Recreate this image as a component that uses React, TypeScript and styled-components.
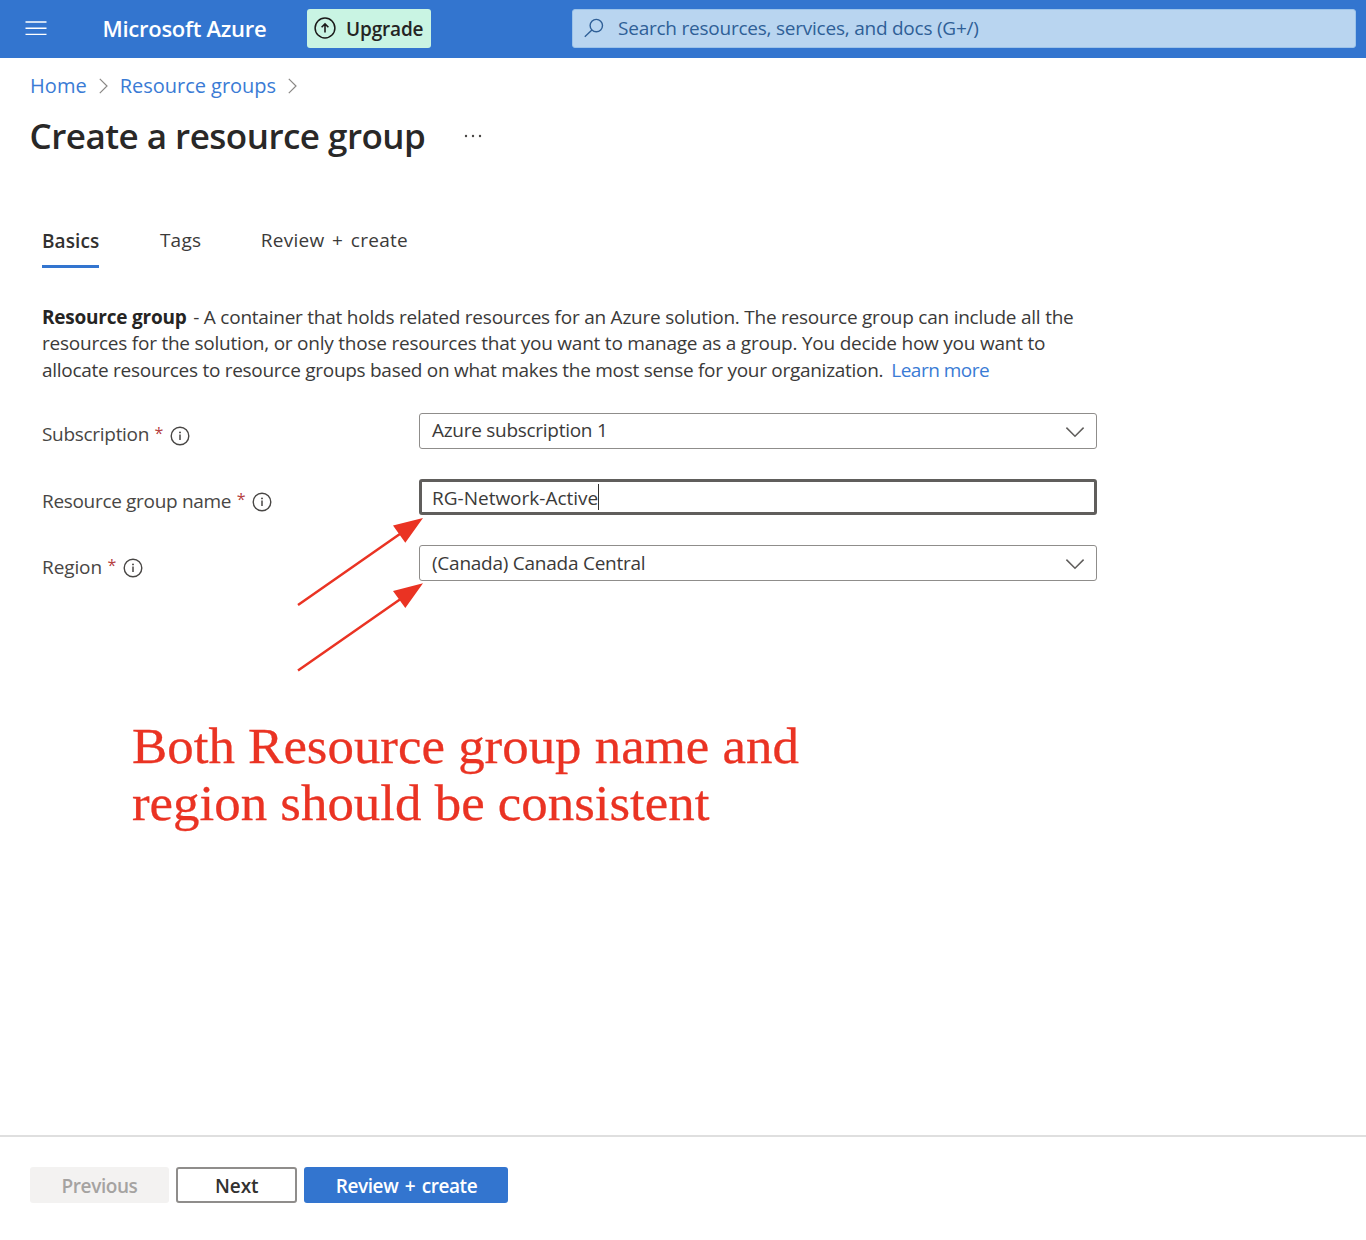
import React from "react";
import styled, { createGlobalStyle } from "styled-components";

const GlobalStyle = createGlobalStyle`
  * { box-sizing: border-box; }
  body {
    margin: 0;
    background: #fff;
    color: #323130;
    font-family: "Open Sans", "Noto Sans", sans-serif;
    font-size: 19px;
  }
`;

const Page = styled.div`
  position: relative;
  display: flex;
  flex-direction: column;
  height: 1240px;
  overflow: hidden;
`;

const TopBar = styled.header`
  display: flex;
  align-items: center;
  flex: none;
  height: 58px;
  padding: 0 10px 2px 25px;
  background: #3375cf;
`;

const MenuIcon = styled.svg`
  flex: none;
  width: 22px;
  height: 16px;
  margin-right: 55.5px;
`;

const Brand = styled.div`
  width: 204.5px;
  color: #fff;
  font-size: 22px;
  font-weight: 600;
  letter-spacing: -0.27px;
  line-height: 36px;
  white-space: nowrap;
`;

const Upgrade = styled.button`
  display: flex;
  align-items: center;
  gap: 10px;
  width: 124px;
  height: 39px;
  padding: 0 0 1px 7px;
  border: 0;
  border-radius: 3px;
  background: #c9f4e3;
  color: #252423;
  font: 600 19px/36px "Open Sans", sans-serif;
  letter-spacing: -0.15px;
  white-space: nowrap;
  & > svg { flex: none; }
  & > span { padding-top: 2px; }
`;

const SearchBox = styled.div`
  display: flex;
  align-items: center;
  gap: 13px;
  flex: 1;
  height: 39px;
  margin-left: 141px;
  padding: 0 0 1px 11px;
  border: 1px solid #9cc3ea;
  border-radius: 3px;
  background: #b9d5f0;
  color: #2f5f97;
  letter-spacing: -0.23px;
  line-height: 36px;
  white-space: nowrap;
  & > span { margin-left: 1px; }
`;

const Breadcrumb = styled.nav`
  display: flex;
  align-items: center;
  height: 30px;
  margin-top: 13px;
  padding-left: 30px;
  font-size: 20px;
`;

const Crumb = styled.a<{ $tracking: number }>`
  color: #3a7bd5;
  letter-spacing: ${(p) => p.$tracking}px;
  line-height: 30px;
`;

const CrumbArrow = styled.svg`
  width: 9px;
  height: 16px;
  margin: 0 12px;
`;

const TitleRow = styled.div`
  display: flex;
  align-items: center;
  gap: 38px;
  height: 50px;
  margin-top: 10px;
  padding-left: 29.5px;
`;

const Title = styled.h1`
  margin: 0;
  color: #292827;
  font-size: 35px;
  font-weight: 600;
  letter-spacing: -0.52px;
  line-height: 50px;
`;

const Tabs = styled.div`
  display: flex;
  align-items: flex-start;
  height: 43px;
  margin-top: 64px;
  padding-left: 42px;
`;

const Tab = styled.div<{ $active?: boolean; $gap?: number }>`
  height: 43px;
  margin-left: ${(p) => p.$gap ?? 0}px;
  border-bottom: 3px solid ${(p) => (p.$active ? "#3375cf" : "transparent")};
  color: ${(p) => (p.$active ? "#323130" : "#3b3a39")};
  font-weight: ${(p) => (p.$active ? 600 : 400)};
  line-height: ${(p) => (p.$active ? 33 : 31)}px;
  word-spacing: ${(p) => (p.$active ? 0 : 2.5)}px;
  letter-spacing: ${(p) => (p.$active ? 0.1 : 0.25)}px;
`;

const Description = styled.p`
  margin: 36px 0 0;
  padding-left: 42px;
  color: #3b3a39;
  line-height: 26.45px;
  white-space: nowrap;
  & b { margin-right: 2px; color: #252423; letter-spacing: -0.22px; }
`;

const Line = styled.span<{ $tracking: number }>`
  display: block;
  letter-spacing: ${(p) => p.$tracking}px;
`;

const Link = styled.a`
  margin-left: 8px;
  color: #3a7bd5;
  letter-spacing: -0.5px;
`;

const Form = styled.div`
  display: grid;
  gap: 30px;
  margin-top: 29.5px;
  padding-left: 42px;
`;

const Field = styled.div`
  display: grid;
  grid-template-columns: 377px 678px;
  height: 36.25px;
`;

const Label = styled.label<{ $tracking: number }>`
  display: flex;
  align-items: center;
  height: 43px;
  color: #484644;
  line-height: 42px;
  letter-spacing: ${(p) => p.$tracking}px;
`;

const Required = styled.span`
  margin: 0 7px 3px 5.5px;
  color: #b5403f;
  font-size: 16px;
  letter-spacing: 0;
`;

const Control = styled.div<{ $focused?: boolean; $tracking: number }>`
  display: flex;
  align-items: center;
  justify-content: space-between;
  height: 36px;
  padding: 0 ${(p) => (p.$focused ? 10 : 11)}px ${(p) => (p.$focused ? 0 : 1)}px ${(p) => (p.$focused ? 10 : 12)}px;
  border: ${(p) => (p.$focused ? "3px solid #605e5c" : "1.5px solid #8f8d8b")};
  border-radius: 3px;
  color: #3b3a39;
  letter-spacing: ${(p) => p.$tracking}px;
  line-height: 30px;
  & > svg { margin-top: 3px; }
`;

const Typed = styled.span`
  height: 26px;
  border-right: 1.5px solid #323130;
  line-height: 28px;
`;

const Footer = styled.footer`
  display: flex;
  gap: 7.5px;
  height: 105px;
  margin-top: auto;
  padding: 30px 0 0 29.5px;
  border-top: 2px solid #dfdfdf;
`;

const Button = styled.button<{ $kind: "disabled" | "plain" | "primary"; $width: number }>`
  width: ${(p) => p.$width}px;
  height: 36px;
  padding: 2px 0 0 1px;
  border: ${(p) => (p.$kind === "plain" ? "2px solid #8f8d8b" : "0")};
  border-radius: 3px;
  background: ${(p) => ({ disabled: "#f3f2f1", plain: "#fff", primary: "#3375cf" })[p.$kind]};
  color: ${(p) => ({ disabled: "#a5a3a1", plain: "#323130", primary: "#fff" })[p.$kind]};
  font: 600 19px/30px "Open Sans", sans-serif;
  letter-spacing: ${(p) => (p.$kind === "plain" ? -0.1 : -0.42)}px;
  word-spacing: 2px;
`;

const Arrows = styled.svg`
  position: absolute;
  left: 290px;
  top: 510px;
  width: 140px;
  height: 165px;
`;

const Note = styled.div`
  position: absolute;
  left: 131.5px;
  top: 718px;
  color: #ea3323;
  font-family: "Liberation Serif", serif;
  font-size: 50px;
  line-height: 57px;
  white-space: nowrap;
  transform: scaleX(1.058);
  transform-origin: left;
  -webkit-text-stroke: 0.3px #ea3323;
`;

const InfoIcon = styled.svg`
  flex: none;
  width: 20px;
  height: 20px;
  margin-top: 3px;
`;

const Info = () => (
  <InfoIcon viewBox="0 0 20 20" fill="none">
    <circle cx="10" cy="10" r="8.8" stroke="#484644" strokeWidth="1.4" />
    <path d="M10 8.6v5.4" stroke="#484644" strokeWidth="1.5" />
    <circle cx="10" cy="6.4" r="0.95" fill="#484644" />
  </InfoIcon>
);

const Chevron = () => (
  <svg width="20" height="12" viewBox="0 0 20 12" fill="none">
    <path d="M1.4 1.6L10 10.2l8.6-8.6" stroke="#605e5c" strokeWidth="1.5" />
  </svg>
);

const Separator = () => (
  <CrumbArrow viewBox="0 0 9 16" fill="none">
    <path d="M0.8 0.8L8 8l-7.2 7.2" stroke="#8a8886" strokeWidth="1.2" />
  </CrumbArrow>
);

export default function App() {
  return (
    <Page>
      <GlobalStyle />
      <TopBar>
        <MenuIcon viewBox="0 0 22 16" fill="none">
          <path d="M0.5 2h21M0.5 8.2h21M0.5 14.4h21" stroke="#fff" strokeWidth="1.4" />
        </MenuIcon>
        <Brand>Microsoft Azure</Brand>
        <Upgrade>
          <svg width="22" height="22" viewBox="0 0 22 22" fill="none" stroke="#1b1a19">
            <circle cx="11" cy="11" r="9.9" strokeWidth="1.5" />
            <path d="M11 15.4V7.2M7.6 10.3L11 6.9l3.4 3.4" strokeWidth="1.6" />
          </svg>
          <span>Upgrade</span>
        </Upgrade>
        <SearchBox>
          <svg width="20" height="20" viewBox="0 0 20 20" fill="none" stroke="#2f5f97">
            <circle cx="12.3" cy="7.6" r="6.2" strokeWidth="1.4" />
            <path d="M7.9 12L0.8 18.8" strokeWidth="1.4" />
          </svg>
          <span>Search resources, services, and docs (G+/)</span>
        </SearchBox>
      </TopBar>
      <Breadcrumb>
        <Crumb $tracking={0.05}>Home</Crumb>
        <Separator />
        <Crumb $tracking={-0.03}>Resource groups</Crumb>
        <Separator />
      </Breadcrumb>
      <TitleRow>
        <Title>Create a resource group</Title>
        <svg width="20" height="4" viewBox="0 0 20 4" fill="#484644">
          <circle cx="3" cy="2" r="1.2" />
          <circle cx="10" cy="2" r="1.2" />
          <circle cx="17" cy="2" r="1.2" />
        </svg>
      </TitleRow>
      <Tabs>
        <Tab $active>Basics</Tab>
        <Tab $gap={60.5}>Tags</Tab>
        <Tab $gap={59.5}>Review + create</Tab>
      </Tabs>
      <Description>
        <Line $tracking={-0.235}>
          <b>Resource group</b> - A container that holds related resources for an Azure solution. The resource group can include all the
        </Line>
        <Line $tracking={-0.23}>resources for the solution, or only those resources that you want to manage as a group. You decide how you want to</Line>
        <Line $tracking={-0.28}>
          allocate resources to resource groups based on what makes the most sense for your organization.
          <Link>Learn more</Link>
        </Line>
      </Description>
      <Form>
        <Field>
          <Label $tracking={-0.3}>Subscription<Required>*</Required><Info /></Label>
          <Control $tracking={-0.28}>Azure subscription 1<Chevron /></Control>
        </Field>
        <Field>
          <Label $tracking={-0.32}>Resource group name<Required>*</Required><Info /></Label>
          <Control $focused $tracking={0}><Typed>RG-Network-Active</Typed></Control>
        </Field>
        <Field>
          <Label $tracking={-0.1}>Region<Required>*</Required><Info /></Label>
          <Control $tracking={-0.25}>(Canada) Canada Central<Chevron /></Control>
        </Field>
      </Form>
      <Footer>
        <Button $kind="disabled" $width={139}>Previous</Button>
        <Button $kind="plain" $width={120.5}>Next</Button>
        <Button $kind="primary" $width={204}>Review + create</Button>
      </Footer>
      <Arrows viewBox="290 510 140 165" fill="#ea3323" stroke="none">
        <path d="M298 605L402 532.5M298 670.5L402 598" stroke="#ea3323" strokeWidth="2.5" />
        <path d="M423 518l-30 7.6 12.3 17.2zM423 583.3l-30 7.6 12.3 17.2z" />
      </Arrows>
      <Note>
        <div>Both Resource group name and</div>
        <div>region should be consistent</div>
      </Note>
    </Page>
  );
}
